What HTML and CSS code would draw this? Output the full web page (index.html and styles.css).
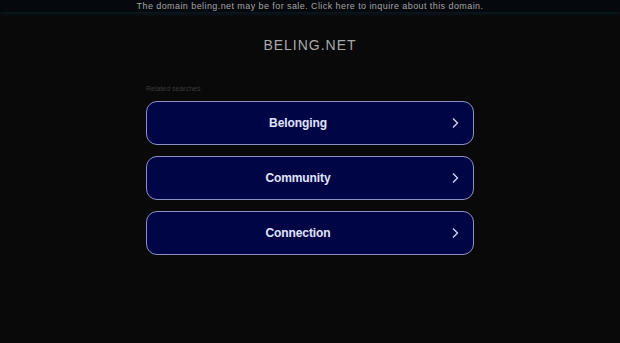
FILE: index.html
```html
<!DOCTYPE html>
<html>
<head>
<meta charset="utf-8">
<link rel="stylesheet" href="styles.css">
</head>
<body>
<div class="topbar">The domain beling.net may be for sale. Click here to inquire about this domain.</div>
<div class="title">BELING.NET</div>
<div class="content">
  <div class="related">Related searches</div>
  <div class="links">
    <a class="btn"><span>Belonging</span><svg class="chev" viewBox="0 0 8 12" width="8" height="12"><path d="M2 1.5 L6.5 6 L2 10.5" fill="none" stroke="#d0d4f0" stroke-width="1.4"/></svg></a>
    <a class="btn"><span>Community</span><svg class="chev" viewBox="0 0 8 12" width="8" height="12"><path d="M2 1.5 L6.5 6 L2 10.5" fill="none" stroke="#d0d4f0" stroke-width="1.4"/></svg></a>
    <a class="btn"><span>Connection</span><svg class="chev" viewBox="0 0 8 12" width="8" height="12"><path d="M2 1.5 L6.5 6 L2 10.5" fill="none" stroke="#d0d4f0" stroke-width="1.4"/></svg></a>
  </div>
</div>
</body>
</html>
```
FILE: styles.css
```css
html, body {
  margin: 0;
  padding: 0;
  background: #090909;
  font-family: "Liberation Sans", Arial, sans-serif;
}
.topbar {
  height: 12px;
  line-height: 12px;
  text-align: center;
  font-size: 9px;
  letter-spacing: 0.42px;
  color: #a4a4a4;
  background: #05080c;
  box-shadow: 0 2px 4px #0b1a26;
}
.title {
  margin-top: 25px;
  text-align: center;
  font-size: 14px;
  letter-spacing: 1px;
  color: #a8a8a8;
  line-height: 16px;
}
.content {
  width: 328px;
  margin: 31px auto 0;
}
.related {
  font-size: 7px;
  color: #3a3a3a;
  line-height: 10px;
}
.links {
  margin-top: 7px;
  display: flex;
  flex-direction: column;
  gap: 11px;
}
.btn {
  position: relative;
  display: flex;
  align-items: center;
  justify-content: center;
  box-sizing: border-box;
  height: 44px;
  padding-right: 24px;
  border: 1px solid #8d90c4;
  border-radius: 11px;
  background: #000546;
  color: #e2e4ff;
  font-weight: bold;
  font-size: 12px;
  letter-spacing: -0.1px;
}
.chev {
  position: absolute;
  right: 14px;
  top: 15px;
}
```
